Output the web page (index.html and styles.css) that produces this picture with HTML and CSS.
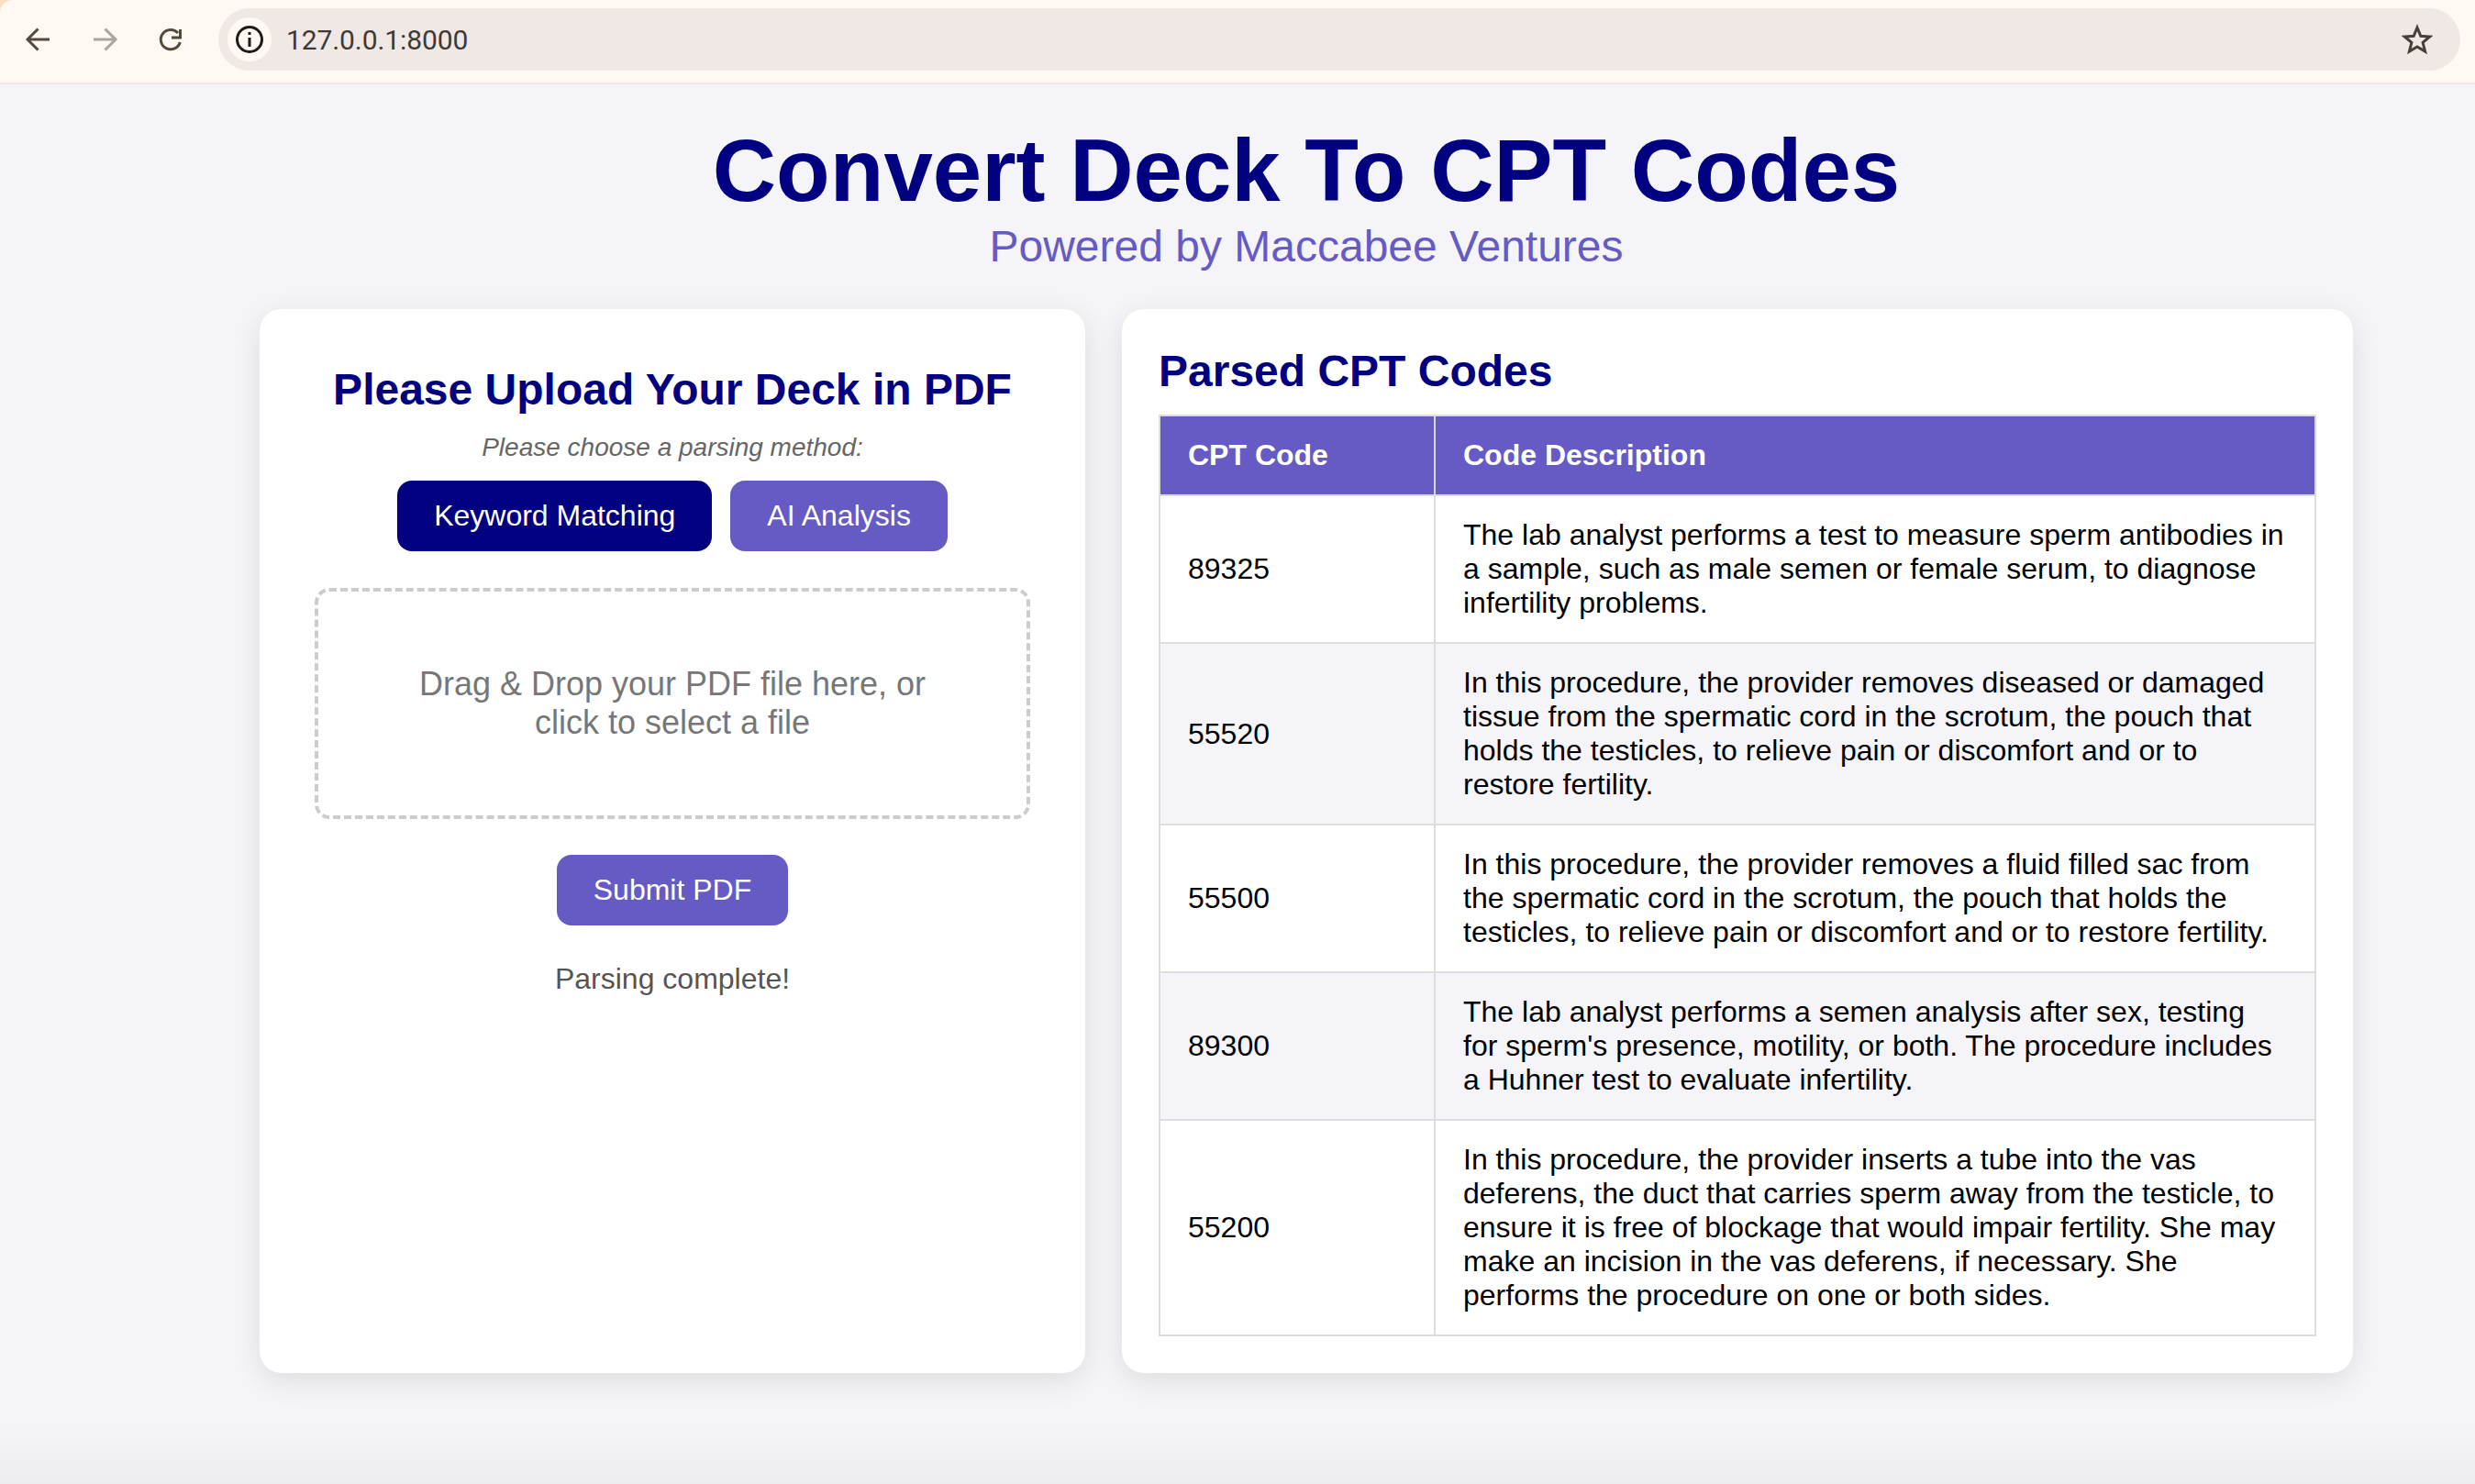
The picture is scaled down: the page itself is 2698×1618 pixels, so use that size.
FILE: index.html
```html
<!DOCTYPE html>
<html lang="en">
<head>
    <meta charset="UTF-8">
    <meta name="viewport" content="width=device-width, initial-scale=1.0">
    <title>Convert Deck To CPT Codes</title>
    <link rel="stylesheet" href="styles.css">
</head>
<body>
    <div class="chrome">
        <header class="toolbar">
            <span class="nav-btn">
                <svg width="36" height="36" viewBox="0 0 36 36" fill="none" stroke="#55483c" stroke-width="3"><path d="M30 18H7M17.500 6.500L6 18l11.500 11.500"/></svg>
            </span>
            <span class="nav-btn">
                <svg width="36" height="36" viewBox="0 0 36 36" fill="none" stroke="#aaa5a0" stroke-width="3"><path d="M6 18h23M18.500 6.500L30 18 18.500 29.500"/></svg>
            </span>
            <span class="nav-btn">
                <svg width="36" height="36" viewBox="0 0 36 36" fill="none" stroke="#55483c" stroke-width="3"><path d="M28.300 21A10.700 10.700 0 1 1 26 11"/><path d="M28.500 7v9h-9.500"/></svg>
            </span>
            <div class="address">
                <span class="info-chip">
                    <svg width="34" height="34" viewBox="0 0 34 34" fill="none" stroke="#1f1b18" stroke-width="3"><circle cx="17" cy="17" r="13.500"/><path d="M17 15v10M17 9v3"/></svg>
                </span>
                <span class="url">127.0.0.1:8000</span>
                <svg class="star" width="34" height="34" viewBox="0 0 34 34" fill="none" stroke="#46403a" stroke-width="3"><path d="M17 4l3.800 9.300 10 .7-7.700 6.400 2.500 9.700L17 25l-8.600 5.100 2.500-9.700L3.200 14l10-.7z"/></svg>
            </div>
        </header>
    </div>
    <main class="page">
        <h1 class="title">Convert Deck To CPT Codes</h1>
        <p class="subtitle">Powered by Maccabee Ventures</p>
        <div class="columns">
            <section class="card upload">
                <h2>Please Upload Your Deck in PDF</h2>
                <p class="hint">Please choose a parsing method:</p>
                <div class="methods">
                    <button class="btn btn-active">Keyword Matching</button>
                    <button class="btn">AI Analysis</button>
                </div>
                <div class="dropzone">Drag &amp; Drop your PDF file here, or click to select a file</div>
                <button class="btn">Submit PDF</button>
                <p class="status">Parsing complete!</p>
            </section>
            <section class="card results">
                <h2>Parsed CPT Codes</h2>
                <table>
                    <thead>
                        <tr><th class="code-col">CPT Code</th><th>Code Description</th></tr>
                    </thead>
                    <tbody>
                        <tr>
                            <td>89325</td>
                            <td>The lab analyst performs a test to measure sperm antibodies in a sample, such as male semen or female serum, to diagnose infertility problems.</td>
                        </tr>
                        <tr>
                            <td>55520</td>
                            <td>In this procedure, the provider removes diseased or damaged tissue from the spermatic cord in the scrotum, the pouch that holds the testicles, to relieve pain or discomfort and or to restore fertility.</td>
                        </tr>
                        <tr>
                            <td>55500</td>
                            <td>In this procedure, the provider removes a fluid filled sac from the spermatic cord in the scrotum, the pouch that holds the testicles, to relieve pain or discomfort and or to restore fertility.</td>
                        </tr>
                        <tr>
                            <td>89300</td>
                            <td>The lab analyst performs a semen analysis after sex, testing for sperm's presence, motility, or both. The procedure includes a Huhner test to evaluate infertility.</td>
                        </tr>
                        <tr>
                            <td>55200</td>
                            <td>In this procedure, the provider inserts a tube into the vas deferens, the duct that carries sperm away from the testicle, to ensure it is free of blockage that would impair fertility. She may make an incision in the vas deferens, if necessary. She performs the procedure on one or both sides.</td>
                        </tr>
                    </tbody>
                </table>
            </section>
        </div>
    </main>
</body>
</html>
```

FILE: styles.css
```css
*,
*::before,
*::after {
    box-sizing: border-box;
    padding: 0;
    margin: 0;
}

body {
    height: 1618px;
    overflow: hidden;
    font-family: "Liberation Sans", Arial, sans-serif;
    background: linear-gradient(to bottom, #f4f4f9 96%, #ececf1 100%);
}

.chrome {
    background-color: #fbdfc0;
}
.toolbar {
    display: flex;
    align-items: center;
    height: 92px;
    padding: 0 16px 4px 6px;
    background-color: #fff8f3;
    border-bottom: 2px solid #f3e6da;
    border-top-left-radius: 14px;
}
.nav-btn {
    display: flex;
    align-items: center;
    justify-content: center;
    width: 72px;
}
.address {
    display: flex;
    align-items: center;
    flex: 1;
    height: 68px;
    margin-left: 16px;
    padding: 0 30px 0 10px;
    background-color: #f0e8e4;
    border-radius: 34px;
}
.info-chip {
    display: flex;
    align-items: center;
    justify-content: center;
    width: 48px;
    height: 48px;
    background-color: #fff8f3;
    border-radius: 50%;
}
.url {
    margin-left: 16px;
    font-family: Roboto, sans-serif;
    font-size: 30px;
    letter-spacing: -0.1px;
    color: #3f3935;
}
.star {
    margin-left: auto;
}

.page {
    padding: 39px 133px 0 283px;
}
.title {
    font-size: 96px;
    color: #000080;
    text-align: center;
}
.subtitle {
    margin-bottom: 41px;
    font-size: 48px;
    color: #665bc4;
    text-align: center;
}
.columns {
    display: flex;
    gap: 40px;
    height: 1160px;
}
.card {
    background-color: white;
    border-radius: 24px;
    box-shadow: 0 8px 32px rgba(0, 0, 0, 0.1);
}
.card h2 {
    font-size: 48px;
    color: #000080;
}

.upload {
    display: flex;
    flex-direction: column;
    align-items: center;
    flex: 0 0 900px;
    padding: 60px;
}
.hint {
    margin-top: 20px;
    font-size: 28px;
    font-style: italic;
    color: #666;
}
.methods {
    display: flex;
    gap: 20px;
    margin-top: 20px;
}
.btn {
    padding: 20px 40px;
    border: none;
    border-radius: 16px;
    font-family: inherit;
    font-size: 32px;
    color: white;
    background-color: #665bc4;
}
.btn-active {
    background-color: #000080;
}
.dropzone {
    display: flex;
    align-items: center;
    justify-content: center;
    width: 780px;
    height: 252px;
    margin: 40px 0 39px;
    padding: 0 80px;
    border: 4px dashed #ccc;
    border-radius: 16px;
    font-size: 36px;
    line-height: 42px;
    color: #777;
    text-align: center;
}
.status {
    margin-top: 40px;
    font-size: 32px;
    color: #555;
}

.results {
    flex: 1;
    padding: 40px;
}
.results h2 {
    margin-bottom: 20px;
}
table {
    width: 100%;
    border-collapse: collapse;
    font-size: 32px;
}
th, td {
    padding: 24px 30px;
    border: 2px solid #ddd;
    text-align: left;
}
th {
    color: white;
    background-color: #665bc4;
}
.code-col {
    width: 300px;
}
tbody tr:nth-child(even) {
    background-color: #f4f4f9;
}
```
